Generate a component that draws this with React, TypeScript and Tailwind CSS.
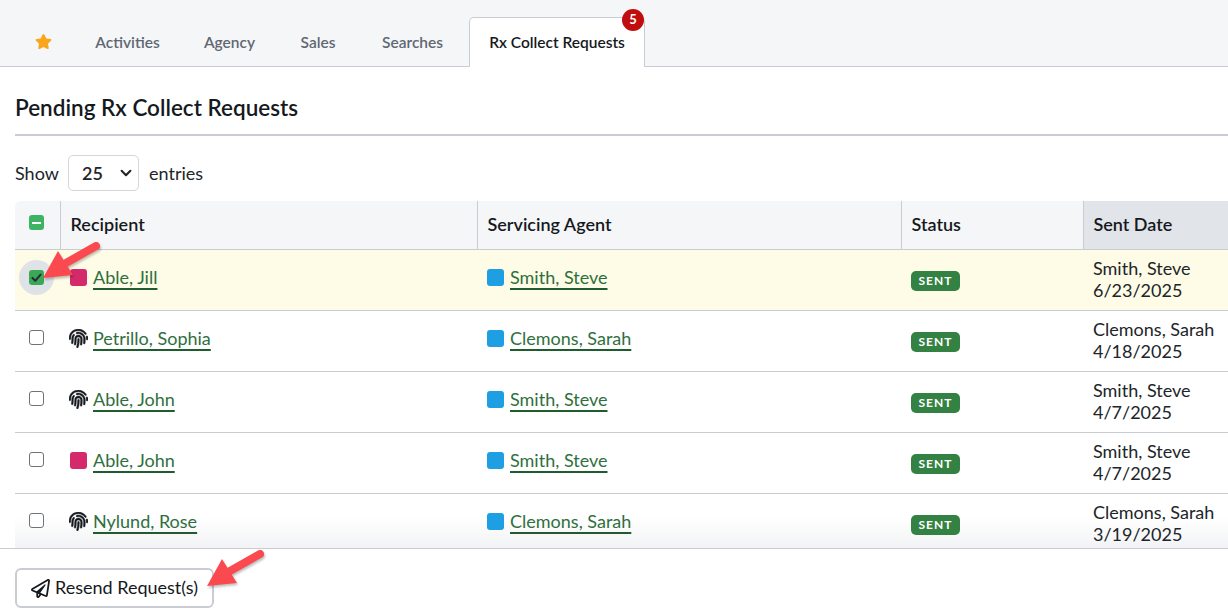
import { FaStar, FaFingerprint, FaRegPaperPlane } from 'react-icons/fa';

interface Row {
    recipient: string;
    icon: 'pink' | 'print';
    agent: string;
    sentBy: string;
    date: string;
    selected?: boolean;
}

const rows: Row[] = [
    { recipient: 'Able, Jill', icon: 'pink', agent: 'Smith, Steve', sentBy: 'Smith, Steve', date: '6/23/2025', selected: true },
    { recipient: 'Petrillo, Sophia', icon: 'print', agent: 'Clemons, Sarah', sentBy: 'Clemons, Sarah', date: '4/18/2025' },
    { recipient: 'Able, John', icon: 'print', agent: 'Smith, Steve', sentBy: 'Smith, Steve', date: '4/7/2025' },
    { recipient: 'Able, John', icon: 'pink', agent: 'Smith, Steve', sentBy: 'Smith, Steve', date: '4/7/2025' },
    { recipient: 'Nylund, Rose', icon: 'print', agent: 'Clemons, Sarah', sentBy: 'Clemons, Sarah', date: '3/19/2025' },
];

const tabs = [
    { label: 'Activities', className: 'w-[111px]' },
    { label: 'Agency', className: 'w-[93px]' },
    { label: 'Sales', className: 'w-[84px]' },
    { label: 'Searches', className: 'w-[105px]' },
];

function Arrow({ className }: { className: string }) {
    return (
        <svg viewBox="0 0 60 42" className={`drop-shadow-[1px_2px_1px_rgba(0,0,0,0.25)] ${className}`} fill="#fb4a4f">
            <path d="M25 23 L55 6" stroke="#fb4a4f" strokeWidth="8" strokeLinecap="round" />
            <path d="M2 38 L17 11 L32 35 Z" />
        </svg>
    );
}

function RowLink({ children }: { children: string }) {
    return (
        <a className="text-[#2f6f3e] underline decoration-[#1f5c2e] decoration-2 underline-offset-[4px]">
            {children}
        </a>
    );
}

export default function App() {
    return (
        <div className="flex h-[615px] w-[1228px] flex-col overflow-hidden bg-white font-['Lato',sans-serif] text-[18px] text-[#212529]">
            <div className="flex h-[67px] shrink-0 items-end border-b border-[#c9cdd3] bg-[#f5f6f8] pl-[14px]">
                <div className="flex h-[50px] w-[58px] items-center justify-center">
                    <FaStar className="text-[17px] text-[#f9a61a]" />
                </div>
                {tabs.map((t) => (
                    <div key={t.label} className={`flex h-[50px] items-center justify-center pt-[4px] text-[15.5px] font-semibold text-[#5f6772] ${t.className}`}>
                        {t.label}
                    </div>
                ))}
                <div className="relative ml-[4px] -mb-px flex h-[50px] w-[176px] items-center justify-center rounded-t-[5px] border border-b-0 border-[#c9cdd3] bg-white text-[15.5px] font-semibold text-[#15191d]">
                    Rx Collect Requests
                    <span className="absolute -top-[9px] right-0 flex h-[22px] w-[22px] items-center justify-center rounded-full bg-[#c00d0d] text-[13px] font-bold text-white">
                        5
                    </span>
                </div>
            </div>

            <div className="relative min-h-0 flex-1 overflow-hidden">
                <div className="pl-[15px]">
                    <h1 className="flex h-[69px] items-end border-b-2 border-[#c9cdd3] pb-[11px] text-[22.5px] leading-[30px] font-semibold text-[#15191d]">
                        Pending Rx Collect Requests
                    </h1>
                    <div className="mt-[19px] flex h-[36px] items-center">
                        <span className="w-[53px]">Show</span>
                        <div className="flex h-[36px] w-[71px] items-center justify-between rounded-[5px] border border-[#d3d6da] bg-white pr-[5px] pl-[13px] font-semibold">
                            25
                            <svg viewBox="0 0 16 16" className="h-[14px] w-[14px]" fill="none" stroke="#212529" strokeWidth="2.4" strokeLinecap="round" strokeLinejoin="round">
                                <path d="M3 5.5 L8 10.5 L13 5.5" />
                            </svg>
                        </div>
                        <span className="ml-[10px]">entries</span>
                    </div>

                    <table className="mt-[10px] w-[1300px] table-fixed border-collapse">
                        <colgroup>
                            <col className="w-[45px]" />
                            <col className="w-[417px]" />
                            <col className="w-[424px]" />
                            <col className="w-[182px]" />
                            <col />
                        </colgroup>
                        <thead>
                            <tr className="h-[48px] border-b border-[#c9cdd3] bg-[#f5f6f8] text-left text-[#15191d]">
                                <th className="rounded-tl-[6px] border-r border-[#c9cdd3] p-0">
                                    <span className="ml-[14px] flex h-[15px] w-[15px] -translate-y-[2px] items-center justify-center rounded-[3px] bg-[#3cb464]">
                                        <span className="h-[2px] w-[9px] bg-white" />
                                    </span>
                                </th>
                                <th className="border-r border-[#c9cdd3] px-[10px] font-semibold">Recipient</th>
                                <th className="border-r border-[#c9cdd3] px-[10px] font-semibold">Servicing Agent</th>
                                <th className="border-r border-[#c9cdd3] px-[10px] font-semibold">Status</th>
                                <th className="bg-[#e1e4e8] px-[10px] font-semibold">Sent Date</th>
                            </tr>
                        </thead>
                        <tbody>
                            {rows.map((r, i) => (
                                <tr
                                    key={i}
                                    className={`h-[61px] border-b border-[#c9cdd3] ${r.selected ? 'bg-[#fefce6]' : i === rows.length - 1 ? 'bg-gradient-to-b from-white from-40% to-[#f0f1f3]' : 'bg-white'}`}
                                >
                                    <td className="p-0">
                                        {r.selected ? (
                                            <span className="relative ml-[14px] flex h-[15px] w-[15px] -translate-y-[2px] items-center justify-center rounded-[3px]">
                                                <span className="absolute -inset-[10px] rounded-full bg-[#dfe3e8]" />
                                                <span className="absolute inset-0 rounded-[3px] bg-[#3ba856]" />
                                                <svg viewBox="0 0 16 16" className="relative h-[13px] w-[13px]" fill="none" stroke="#25303a" strokeWidth="2.6" strokeLinecap="round" strokeLinejoin="round">
                                                    <path d="M3 8.5 L6.5 12 L13 4.5" />
                                                </svg>
                                            </span>
                                        ) : (
                                            <span className="ml-[14px] block h-[15px] w-[15px] -translate-y-[3px] rounded-[3px] border border-[#6e7479] bg-white" />
                                        )}
                                    </td>
                                    <td className="px-[10px]">
                                        <div className="flex items-center gap-[6px] pb-[4px]">
                                            {r.icon === 'pink' ? (
                                                <span className="h-[17px] w-[17px] rounded-[3px] bg-[#d42a6c]" />
                                            ) : (
                                                <span className="flex w-[17px] justify-center">
                                                    <FaFingerprint className="h-[19px] w-[19px] shrink-0 stroke-current stroke-[10] text-[#15191d]" />
                                                </span>
                                            )}
                                            <RowLink>{r.recipient}</RowLink>
                                        </div>
                                    </td>
                                    <td className="px-[10px]">
                                        <div className="flex items-center gap-[6px] pb-[4px]">
                                            <span className="h-[17px] w-[17px] rounded-[3px] bg-[#1f9fe3]" />
                                            <RowLink>{r.agent}</RowLink>
                                        </div>
                                    </td>
                                    <td className="px-[10px]">
                                        <span className="flex h-[20px] w-[49px] translate-y-[1px] items-center justify-center rounded-[5px] bg-[#348243] text-[12px] font-bold tracking-[1px] text-white">
                                            SENT
                                        </span>
                                    </td>
                                    <td className="px-[10px] pb-[2px] leading-[22px]">
                                        <div>{r.sentBy}</div>
                                        <div>{r.date}</div>
                                    </td>
                                </tr>
                            ))}
                        </tbody>
                    </table>
                </div>

                <Arrow className="absolute top-[173px] left-[41px] h-[42px] w-[60px]" />
            </div>

            <div className="relative flex h-[67px] shrink-0 items-start border-t border-[#c9cdd3] bg-white pt-[19px] pl-[15px]">
                <button className="flex h-[40px] w-[199px] items-center justify-center gap-[5px] rounded-[6px] border-2 border-[#c9cdd3] bg-white pb-[2px] text-[#15191d]">
                    <FaRegPaperPlane className="translate-y-[1px] text-[19px]" />
                    Resend Request(s)
                </button>
                <Arrow className="absolute top-[-1px] left-[205px] h-[42px] w-[60px]" />
            </div>
        </div>
    );
}
